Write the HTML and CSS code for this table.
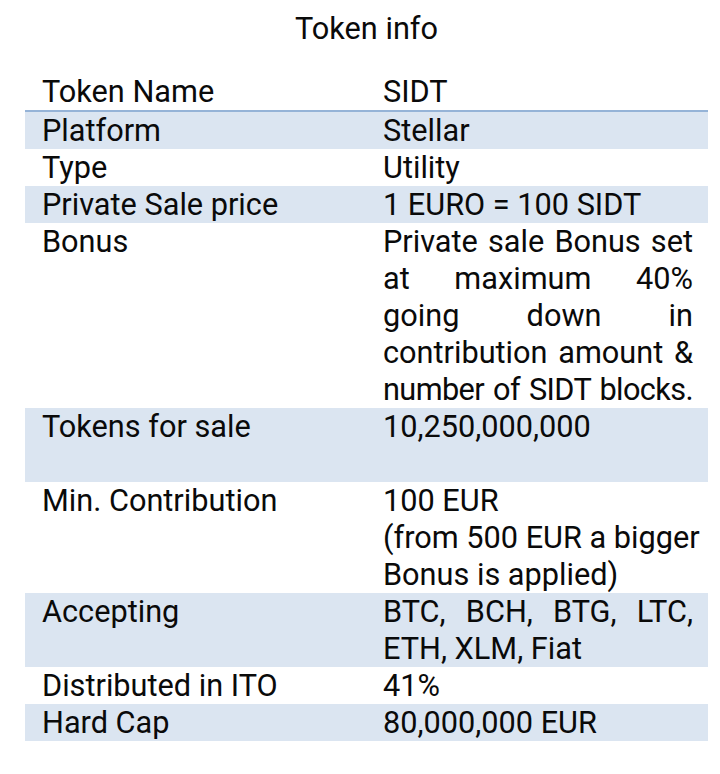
FILE: index.html
```html
<!DOCTYPE html>
<html>
<head>
<meta charset="utf-8">
<link rel="stylesheet" href="styles.css">
</head>
<body>
<div class="page">
  <h1 class="title">Token info</h1>
  <div class="table">
    <div class="row head">
      <div class="cell label">Token Name</div>
      <div class="cell value">SIDT</div>
    </div>
    <div class="row shade">
      <div class="cell label">Platform</div>
      <div class="cell value">Stellar</div>
    </div>
    <div class="row">
      <div class="cell label">Type</div>
      <div class="cell value">Utility</div>
    </div>
    <div class="row shade">
      <div class="cell label">Private Sale price</div>
      <div class="cell value">1 EURO = 100 SIDT</div>
    </div>
    <div class="row">
      <div class="cell label">Bonus</div>
      <div class="cell value">
        <span class="jl">Private sale Bonus set</span>
        <span class="jl">at maximum 40%</span>
        <span class="jl">going down in</span>
        <span class="jl">contribution amount &amp;</span>
        <span class="jl tight">number of SIDT blocks.</span>
      </div>
    </div>
    <div class="row shade tall2">
      <div class="cell label">Tokens for sale</div>
      <div class="cell value">10,250,000,000</div>
    </div>
    <div class="row">
      <div class="cell label">Min. Contribution</div>
      <div class="cell value">
        <span class="ln">100 EUR</span>
        <span class="jl">(from 500 EUR a bigger</span>
        <span class="ln">Bonus is applied)</span>
      </div>
    </div>
    <div class="row shade">
      <div class="cell label">Accepting</div>
      <div class="cell value">
        <span class="jl">BTC, BCH, BTG, LTC,</span>
        <span class="ln">ETH, XLM, Fiat</span>
      </div>
    </div>
    <div class="row">
      <div class="cell label">Distributed in ITO</div>
      <div class="cell value">41%</div>
    </div>
    <div class="row shade">
      <div class="cell label">Hard Cap</div>
      <div class="cell value">80,000,000 EUR</div>
    </div>
  </div>
</div>
</body>
</html>
```

FILE: styles.css
```css
html, body {
  margin: 0;
  padding: 0;
  background: #ffffff;
}

body {
  font-family: Roboto, "Liberation Sans", sans-serif;
  color: #0a0a0a;
  font-size: 30.7px;
  line-height: 37px;
}

.page {
  width: 683px;
  padding: 10px 0 0 25px;
}

.title {
  margin: 0;
  font-size: 30.7px;
  font-weight: 400;
  line-height: 37px;
  text-align: center;
}

.table {
  margin-top: 26px;
}

.row {
  display: grid;
  grid-template-columns: 342px 341px;
}

.row.head {
  border-bottom: 2px solid #95b3d7;
}

.row.shade {
  background: #dbe5f1;
}

.row.tall2 {
  min-height: 74px;
}

.cell.label {
  padding-left: 17px;
  white-space: nowrap;
}

.cell.value {
  padding: 0 15px 0 16px;
  white-space: nowrap;
}

.ln {
  display: block;
  white-space: nowrap;
}

.jl {
  display: block;
  white-space: nowrap;
  text-align: justify;
  text-align-last: justify;
}

.jl.tight {
  letter-spacing: -0.6px;
  word-spacing: -3px;
}
```
